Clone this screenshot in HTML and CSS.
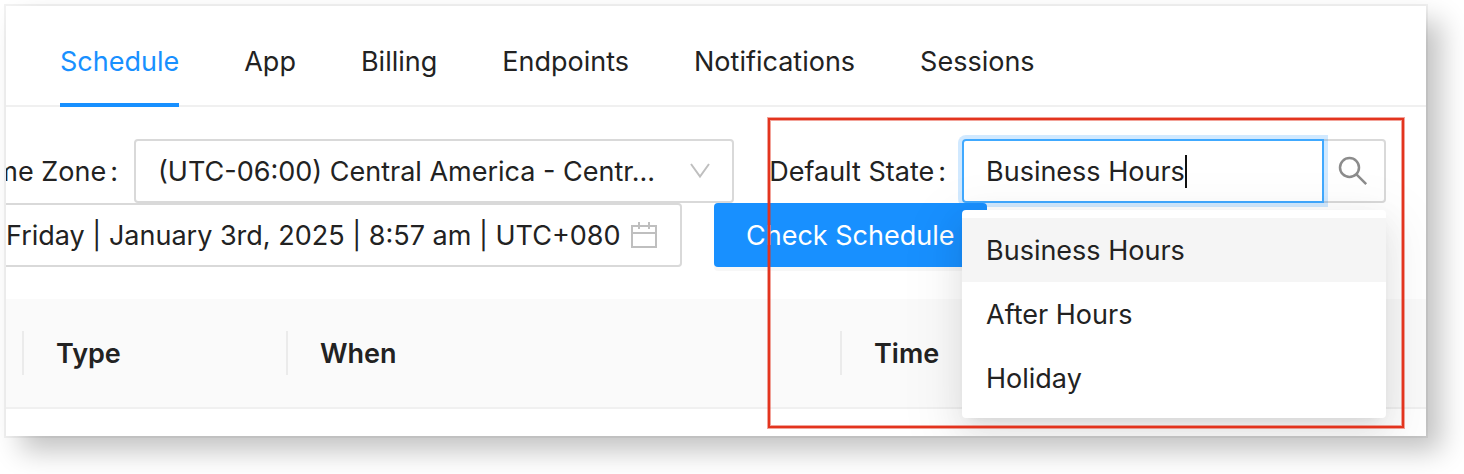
FILE: index.html
```html
<!DOCTYPE html>
<html lang="en">
<head>
<meta charset="utf-8">
<title>Schedule</title>
<link rel="stylesheet" href="styles.css">
</head>
<body>
<main class="card">
  <nav class="tabs">
    <a class="tab tab-active" href="#schedule" aria-current="page">Schedule</a>
    <a class="tab" href="#app">App</a>
    <a class="tab" href="#billing">Billing</a>
    <a class="tab" href="#endpoints">Endpoints</a>
    <a class="tab" href="#notifications">Notifications</a>
    <a class="tab" href="#sessions">Sessions</a>
  </nav>

  <form class="filters">
    <div class="row">
      <label class="label label-zone" for="zone"><span class="label-text">Time Zone</span><span class="colon">:</span></label>
      <div class="control zone">
        <select class="zone-select" id="zone">
          <option>(UTC-06:00) Central America - Centr...</option>
        </select>
        <svg class="chevron" viewBox="0 0 20 16" aria-hidden="true"><path d="M1 1l9 12.5L19 1" fill="none" stroke="#bfbfbf" stroke-width="2"/></svg>
      </div>
      <label class="label label-state" for="state"><span class="label-text">Default State</span><span class="colon">:</span></label>
      <div class="state">
        <div class="state-field">
          <input class="state-input" id="state" type="text" value="Business Hours" autocomplete="off">
          <span class="caret"></span>
        </div>
        <button class="search" type="button" aria-label="Search">
          <svg class="search-icon" viewBox="0 0 30 30" aria-hidden="true"><g fill="none" stroke="#8c8c8c" stroke-width="2.5"><circle cx="11.5" cy="11.5" r="9.5"/><path d="M18.2 18.2l10 10"/></g></svg>
        </button>
        <ul class="menu" role="listbox" aria-label="Default State">
          <li class="option option-active" role="option" aria-selected="true">Business Hours</li>
          <li class="option" role="option" aria-selected="false">After Hours</li>
          <li class="option" role="option" aria-selected="false">Holiday</li>
        </ul>
      </div>
    </div>
    <div class="row">
      <div class="control picker">
        <input class="picker-input" type="text" aria-label="Date and time" value="Friday | January 3rd, 2025 | 8:57 am | UTC+080">
        <svg class="calendar" viewBox="0 0 26 26" aria-hidden="true"><path d="M1 4h24v21H1zM1 11h24M8 0v7M18 0v7" fill="none" stroke="#bfbfbf" stroke-width="2"/></svg>
      </div>
      <button class="check" type="button">Check Schedule</button>
    </div>
  </form>

  <table class="schedule">
    <thead>
      <tr>
        <th class="col-edge"><span class="head"></span></th>
        <th class="col-type"><span class="head">Type</span></th>
        <th class="col-when"><span class="head">When</span></th>
        <th><span class="head head-last">Time</span></th>
      </tr>
    </thead>
  </table>
  <div class="callout"></div>
</main>
</body>
</html>
```

FILE: styles.css
```css
* {
  box-sizing: border-box;
}

body {
  margin: 0;
  padding: 6px 38px 38px 6px;
  background: #fff;
  color: #222;
  font: 400 27px/44px Inter, "Liberation Sans", sans-serif;
}

input,
select,
button {
  margin: 0;
  padding: 0;
  border: 0;
  background: none;
  color: inherit;
  font: inherit;
  outline: 0;
}

.card {
  position: relative;
  overflow: hidden;
  padding-bottom: 27px;
  background: #fff;
  box-shadow: 0 0 0 2px rgba(0, 0, 0, 0.05), 15px 15px 26px rgba(0, 0, 0, 0.24);
}

.tabs {
  display: flex;
  gap: 65px;
  padding-left: 54px;
  box-shadow: inset 0 -2px #f0f0f0;
}

.tab {
  padding: 34px 0 19px;
  border-bottom: 4px solid transparent;
  color: inherit;
  text-decoration: none;
}

.tab-active {
  border-color: #1890ff;
  color: #1890ff;
}

.filters {
  padding: 32px 40px 32px 0;
}

.row {
  display: flex;
  height: 64px;
}

.label {
  display: flex;
  flex: none;
  align-items: center;
  justify-content: flex-end;
  gap: 4px;
  padding: 2px 16px 0 0;
  white-space: nowrap;
}

.label-zone {
  width: 128px;
}

.label-state {
  width: 228px;
}

.control {
  display: flex;
  align-items: center;
  border: 2px solid #d9d9d9;
  border-radius: 4px;
}

.zone {
  width: 600px;
  padding: 0 22px;
}

.zone-select {
  flex: 1;
  min-width: 0;
  height: 46px;
  padding-top: 2px;
  appearance: none;
}

.chevron {
  width: 20px;
  height: 16px;
}

.state {
  position: relative;
  display: flex;
  flex: 1;
  min-width: 0;
}

.state-field {
  position: relative;
  display: flex;
  flex: 1;
  align-items: center;
  min-width: 0;
  padding-left: 22px;
  border: 2px solid #40a9ff;
  border-radius: 4px 0 0 4px;
  box-shadow: 0 0 0 4px rgba(24, 144, 255, 0.2);
}

.state-input {
  field-sizing: content;
  height: 46px;
  padding-top: 1px;
}

.caret {
  width: 2px;
  height: 33px;
  background: #111;
}

.search {
  display: flex;
  align-items: center;
  justify-content: center;
  width: 62px;
  padding-right: 2px;
  border: 2px solid #d9d9d9;
  border-left: 0;
  border-radius: 0 4px 4px 0;
}

.search-icon {
  width: 30px;
  height: 30px;
}

.menu {
  position: absolute;
  z-index: 2;
  top: 71px;
  left: 0;
  right: 0;
  margin: 0;
  padding: 8px 0;
  border-radius: 4px;
  background: #fff;
  box-shadow: 0 6px 12px -8px rgba(0, 0, 0, 0.12), 0 12px 32px rgba(0, 0, 0, 0.08), 0 18px 56px 16px rgba(0, 0, 0, 0.05);
  list-style: none;
}

.option {
  padding: 11px 24px 9px;
}

.option-active {
  background: #f5f5f5;
}

.picker {
  width: 676px;
  padding-right: 23px;
  border-left: 0;
  border-radius: 0 4px 4px 0;
}

.picker-input {
  flex: 1;
  min-width: 0;
  height: 46px;
  padding-top: 1px;
}

.calendar {
  width: 26px;
  height: 26px;
}

.check {
  position: relative;
  z-index: 1;
  margin-left: 32px;
  padding: 2px 32px 0;
  border-radius: 4px;
  background: #1890ff;
  box-shadow: 0 4px 0 rgba(0, 0, 0, 0.03);
  color: #fff;
}

.schedule {
  width: 100%;
  border-collapse: collapse;
  table-layout: fixed;
  background: #fafafa;
  box-shadow: inset 0 -2px #f0f0f0;
}

.schedule th {
  padding: 32px 0 34px 32px;
  font-weight: 600;
  text-align: left;
}

.schedule .col-edge {
  width: 18px;
  padding-left: 0;
}

.col-type {
  width: 264px;
}

.col-when {
  width: 554px;
}

.head {
  display: block;
  height: 44px;
  border-right: 2px solid #ebebeb;
  line-height: 46px;
}

.head-last {
  border-right: 0;
}

.callout {
  position: absolute;
  z-index: 3;
  top: 112px;
  right: 22px;
  bottom: 8px;
  left: 762px;
  border: 2px solid #e3341e;
  box-shadow: 0 0 0 1px rgba(227, 52, 30, 0.45), inset 0 0 0 1px rgba(227, 52, 30, 0.45);
  pointer-events: none;
}
```
